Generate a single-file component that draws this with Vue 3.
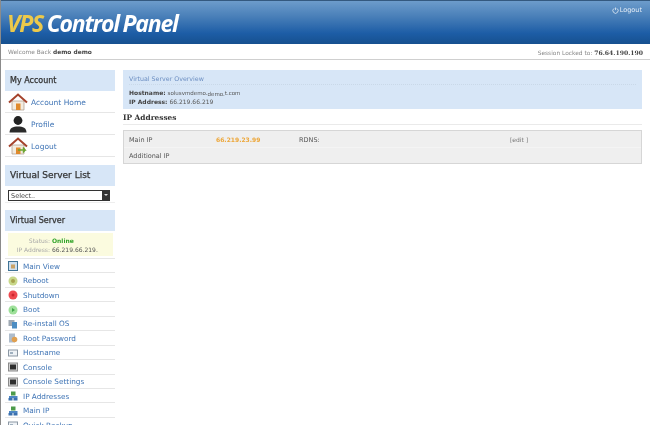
<script setup>
const account = [
  { label: 'Account Home', icon: 'house' },
  { label: 'Profile', icon: 'person' },
  { label: 'Logout', icon: 'houseOut' },
]
const menu = [
  { label: 'Main View', icon: 'view' },
  { label: 'Reboot', icon: 'reboot' },
  { label: 'Shutdown', icon: 'shutdown' },
  { label: 'Boot', icon: 'boot' },
  { label: 'Re-install OS', icon: 'reinstall' },
  { label: 'Root Password', icon: 'password' },
  { label: 'Hostname', icon: 'hostname' },
  { label: 'Console', icon: 'console' },
  { label: 'Console Settings', icon: 'console' },
  { label: 'IP Addresses', icon: 'network' },
  { label: 'Main IP', icon: 'network' },
  { label: 'Quick Backup', icon: 'hostname' },
]
</script>

<template>
  <div class="page">
    <header class="banner">
      <h1 class="logo"><span class="vps">VPS</span> Control Panel</h1>
      <a class="top-logout">
        <svg class="power" viewBox="0 0 8 8" width="7" height="7">
          <path d="M2.4 1.6a3 3 0 1 0 3.2 0M4 .6v3" fill="none" stroke="#e6eef7" stroke-width=".9" />
        </svg>
        Logout
      </a>
    </header>
    <div class="welcome">
      <span>Welcome Back <b>demo demo</b></span>
      <span>Session Locked to: <b class="ip-lock">76.64.190.190</b></span>
    </div>

    <div class="columns">
      <aside class="side">
        <h2 class="side-head">My Account</h2>
        <ul class="account">
          <li v-for="item in account" :key="item.label">
            <svg class="acc-icon" viewBox="0 0 20 20" width="20" height="20">
              <template v-if="item.icon === 'person'">
                <circle cx="10" cy="6.500" r="4.400" fill="#222" />
                <path d="M1.500 18.500c0-4.500 3.500-6 8.500-6s8.500 1.500 8.500 6z" fill="#2b2b2b" />
              </template>
              <template v-else>
                <path d="M4 9h12v9H4z" fill="#f3ece0" stroke="#a99a88" stroke-width=".7" />
                <path d="M1 10.500 10 2.500l9 8" fill="none" stroke="#a5432c" stroke-width="2" />
                <path d="M8 11.500h4.500V18H8z" fill="#e08a2c" />
                <path v-if="item.icon === 'houseOut'" d="M10 14h7l-2-2.500M17 14l-2 2.500" fill="none" stroke="#6aa52e" stroke-width="1.600" />
              </template>
            </svg>
            <span>{{ item.label }}</span>
          </li>
        </ul>

        <h2 class="side-head list-head">Virtual Server List</h2>
        <div class="select-wrap">
          <div class="fake-select">
            <span>Select..</span>
            <i class="arrow"></i>
          </div>
        </div>

        <h2 class="side-head server-head">Virtual Server</h2>
        <div class="status">
          <span class="k">Status:</span><b class="online">Online</b>
          <span class="k">IP Address:</span><span class="v">66.219.66.219.</span>
        </div>
        <ul class="menu">
          <li v-for="item in menu" :key="item.label">
            <svg class="menu-icon" viewBox="0 0 10 10" width="10" height="10">
              <template v-if="item.icon === 'view'">
                <rect x=".5" y=".5" width="9" height="9" fill="#cfe0ee" stroke="#3f7396" />
                <rect x="3" y="3.500" width="4" height="4" fill="#c9a266" />
              </template>
              <template v-else-if="item.icon === 'reboot'">
                <circle cx="5" cy="5" r="4.500" fill="#c9d88a" />
                <circle cx="5" cy="5" r="2" fill="#a6a24e" />
              </template>
              <template v-else-if="item.icon === 'shutdown'">
                <circle cx="5" cy="5" r="4.500" fill="#ee4a50" />
                <circle cx="5" cy="5" r="1.500" fill="#d0242c" />
              </template>
              <template v-else-if="item.icon === 'boot'">
                <circle cx="5" cy="5" r="4.500" fill="#9fe09a" />
                <path d="M4 3v4l3-2z" fill="#3fa648" />
              </template>
              <template v-else-if="item.icon === 'reinstall'">
                <rect x=".5" y="1" width="6" height="6" fill="#9fa9b3" />
                <rect x="4" y="3" width="5" height="6.500" fill="#4d8dc2" />
              </template>
              <template v-else-if="item.icon === 'password'">
                <rect x="1" y=".5" width="6" height="9" fill="#aebccb" />
                <circle cx="6.500" cy="6.500" r="2.800" fill="#e0a050" />
              </template>
              <template v-else-if="item.icon === 'hostname'">
                <rect x=".5" y="2" width="9" height="6" fill="#eef2f6" stroke="#8b97a3" />
                <rect x="2" y="4" width="3" height="2" fill="#9fb0bf" />
              </template>
              <template v-else-if="item.icon === 'console'">
                <rect x=".5" y="1" width="9" height="8" fill="#d4d4d4" stroke="#8a8a8a" />
                <rect x="2" y="2.500" width="6" height="5" fill="#2f2f2f" />
              </template>
              <template v-else>
                <rect x="3" y=".5" width="4.500" height="4" fill="#4c9a4a" />
                <rect x="1" y="5" width="8.500" height="2" fill="#4d86c4" />
                <rect x=".5" y="7" width="4" height="2.500" fill="#3a70ae" />
                <rect x="5.500" y="7" width="4" height="2.500" fill="#3a70ae" />
              </template>
            </svg>
            <span>{{ item.label }}</span>
          </li>
        </ul>
      </aside>

      <main class="content">
        <section class="overview">
          <h3>Virtual Server Overview</h3>
          <p><b>Hostname:</b> <span class="host">solusvmdemo.<span class="low">demo.</span>t.com</span></p>
          <p><b>IP Address:</b> 66.219.66.219</p>
        </section>
        <h2 class="section-title">IP Addresses</h2>
        <div class="ip-table">
          <div class="ip-row first">
            <span>Main IP</span>
            <b class="main-ip">66.219.23.99</b>
            <span>RDNS:</span>
            <span class="edit">[edit ]</span>
          </div>
          <div class="ip-row">
            <span>Additional IP</span>
          </div>
        </div>
      </main>
    </div>
  </div>
</template>

<style>
html, body { margin: 0; background: #fff; overflow: hidden; }
</style>

<style scoped>
.page {
  position: relative;
  width: 650px;
  height: 425px;
  overflow: hidden;
  box-sizing: border-box;
  border-left: 1px solid #8b8b8b;
  font-family: "DejaVu Sans", sans-serif;
  font-size: 7px;
  color: #555;
  background: #fff;
  filter: blur(0.4px);
}
h1, h2, h3, p, ul { margin: 0; padding: 0; }
ul { list-style: none; }

.banner {
  height: 44px;
  margin-left: -1px;
  box-sizing: border-box;
  border-top: 1px solid #34597f;
  background: linear-gradient(#6d9ccb 0%, #4a80b9 35%, #1d5da6 75%, #16508f 100%);
  display: flex;
  justify-content: space-between;
  align-items: flex-start;
  padding: 0 8px 0 7px;
}
.logo {
  margin-top: 9px;
  font: italic 700 23px/26px "Open Sans", sans-serif;
  letter-spacing: -1.250px;
  word-spacing: -1px;
  color: #fff;
  white-space: nowrap;
}
.vps { color: #ecc94b; }
.top-logout {
  margin-top: 5px;
  color: #e6eef7;
  font-size: 6.500px;
  line-height: 9px;
  display: flex;
  align-items: center;
  gap: 1px;
}
.welcome {
  height: 16px;
  box-sizing: border-box;
  display: flex;
  justify-content: space-between;
  align-items: center;
  padding: 1px 7px 0 7px;
  border-bottom: 1px solid #cfcfcf;
  color: #888;
  font-size: 5.900px;
}
.welcome b { color: #444; }
.ip-lock { font: bold 6.100px "DejaVu Serif", serif; }

.columns {
  display: flex;
  gap: 8px;
  padding: 10px 8px 0 4px;
}
.side { width: 110px; flex: none; }
.content { flex: 1; min-width: 0; }

.side-head {
  height: 21px;
  background: #d7e6f7;
  color: #333;
  font-size: 8px;
  font-weight: normal;
  -webkit-text-stroke: 0.25px #333;
  line-height: 21px;
  padding-left: 5px;
}
.list-head { margin-top: 8px; font-size: 9px; }
.server-head { margin-top: 7px; }

.account li {
  height: 22px;
  box-sizing: border-box;
  border-bottom: 1px solid #e6e6e6;
  display: flex;
  align-items: center;
  color: #3f74b5;
  font-size: 7.500px;
  padding: 1px 0 0 3px;
  gap: 3px;
}
.acc-icon { flex: none; }

.select-wrap {
  height: 17px;
  box-sizing: border-box;
  padding: 4px 5px 0 3px;
  border-bottom: 1px solid #eee;
}
.fake-select {
  height: 11px;
  border: 1px solid #333;
  box-sizing: border-box;
  display: flex;
  justify-content: space-between;
  align-items: center;
  font-size: 6.500px;
  color: #444;
  padding-left: 2px;
}
.arrow {
  width: 7px;
  height: 100%;
  background: #333;
  position: relative;
}
.arrow::after {
  content: "";
  position: absolute;
  left: 1.500px;
  top: 3px;
  border: 2px solid transparent;
  border-top: 2px solid #ddd;
}

.status {
  margin: 2px 2px 0 3px;
  height: 23px;
  box-sizing: border-box;
  background: #fbfbdf;
  display: grid;
  grid-template-columns: 42px auto;
  column-gap: 2px;
  align-content: center;
  font-size: 6px;
  line-height: 9px;
}
.k { color: #a8a8a8; text-align: right; }
.v { color: #555; }
.online { color: #32a42a; }

.menu { margin-top: 2px; border-top: 1px solid #e6e6e6; }
.menu li {
  height: 14.450px;
  box-sizing: border-box;
  border-bottom: 1px solid #e6e6e6;
  display: flex;
  align-items: center;
  color: #3f74b5;
  font-size: 7.300px;
  gap: 5px;
  padding: 1px 0 0 3px;
}
.menu-icon { flex: none; }

.overview {
  height: 39px;
  box-sizing: border-box;
  background: #d7e6f7;
  padding: 5px 6px;
  font-size: 6px;
  line-height: 7.500px;
}
.overview h3 {
  font-size: 6.300px;
  font-weight: normal;
  color: #6d8fc2;
  border-bottom: 1px dotted #c9d8e8;
  margin-bottom: 4px;
  padding-bottom: 1px;
  line-height: 8px;
}
.overview b { color: #444; }
.host { font-size: 5.500px; }
.low { position: relative; top: 1px; }

.section-title {
  margin-top: 4px;
  height: 12px;
  box-sizing: border-box;
  border-bottom: 1px solid #eaeaea;
  font: bold 7.400px/9px "DejaVu Serif", serif;
  color: #333;
}
.ip-table {
  margin-top: 5px;
  height: 34px;
  box-sizing: border-box;
  background: #efefef;
  border: 1px solid #d6d6d6;
  font-size: 6.500px;
  color: #555;
}
.ip-row {
  display: grid;
  grid-template-columns: 87px 83px 211px auto;
  height: 16px;
  align-items: center;
  padding-left: 5px;
}
.ip-row.first { height: 17px; padding-top: 1px; border-bottom: 1px solid #f4f4f4; box-sizing: border-box; }
.main-ip { color: #eda73a; font-size: 6px; }
.edit { color: #777; font-size: 6px; }
</style>
